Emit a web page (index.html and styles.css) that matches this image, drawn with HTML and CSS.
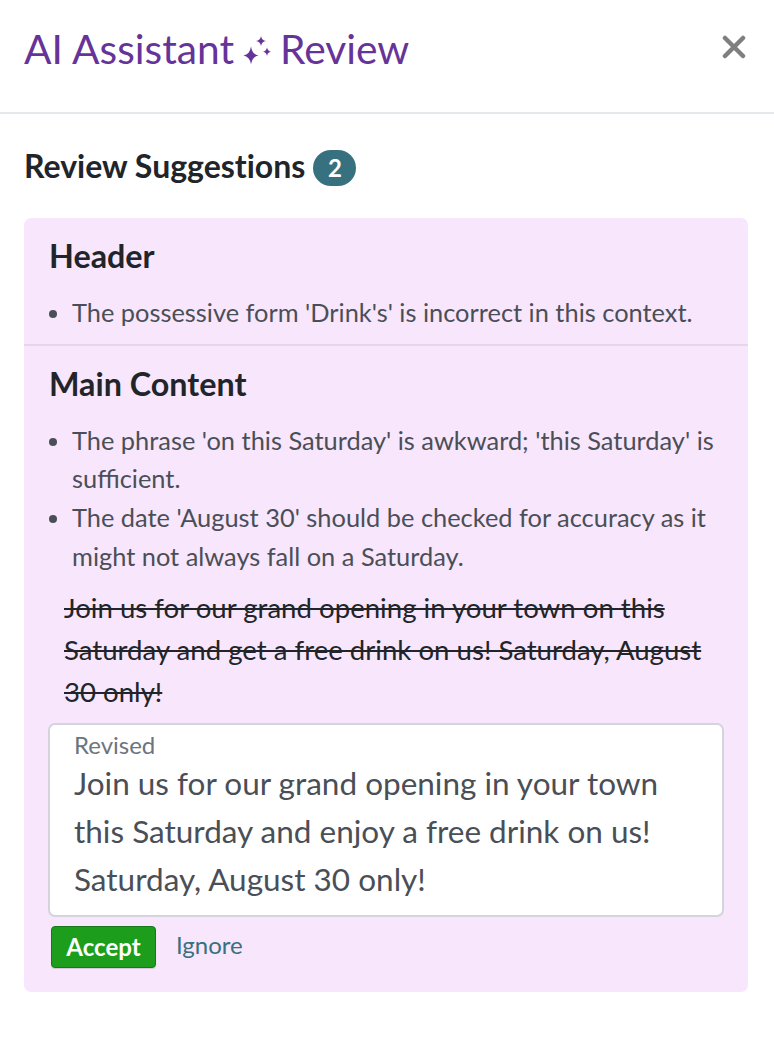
FILE: index.html
```html
<!DOCTYPE html>
<html lang="en">
<head>
<meta charset="utf-8">
<title>AI Assistant Review</title>
<link rel="stylesheet" href="styles.css">
</head>
<body>
<div class="panel">
  <header class="panel-header">
    <h1 class="title">AI Assistant
      <svg class="sparkle" viewBox="0 0 32 30" width="32" height="30" aria-hidden="true">
        <path d="M10 12.5 Q11.1 20.4 17.5 21.5 Q11.1 22.6 10 30.5 Q8.9 22.6 2.5 21.5 Q8.9 20.4 10 12.5 Z"/>
        <path d="M20 2 Q20.7 6.3 25 7 Q20.7 7.7 20 12 Q19.3 7.7 15 7 Q19.3 6.3 20 2 Z"/>
        <path d="M26 13.5 Q26.6 17.1 30 17.7 Q26.6 18.3 26 21.9 Q25.4 18.3 22 17.7 Q25.4 17.1 26 13.5 Z"/>
      </svg>
      Review</h1>
    <button class="close" aria-label="Close">
      <svg viewBox="0 0 24 24" width="24" height="24" aria-hidden="true">
        <path d="M3 3 L21 21 M21 3 L3 21"/>
      </svg>
    </button>
  </header>

  <main class="panel-body">
    <h2 class="suggestions-title">Review Suggestions <span class="badge">2</span></h2>

    <div class="card">
      <section class="card-section">
        <h3 class="section-title">Header</h3>
        <ul class="issues">
          <li>The possessive form 'Drink's' is incorrect in this context.</li>
        </ul>
      </section>
      <section class="card-section">
        <h3 class="section-title">Main Content</h3>
        <ul class="issues">
          <li>The phrase 'on this Saturday' is awkward; 'this Saturday' is sufficient.</li>
          <li>The date 'August 30' should be checked for accuracy as it might not always fall on a Saturday.</li>
        </ul>
        <p class="original">Join us for our grand opening in your town on this Saturday and get a free drink on us! Saturday, August 30 only!</p>
        <div class="revised">
          <div class="revised-label">Revised</div>
          <div class="revised-text">Join us for our grand opening in your town this Saturday and enjoy a free drink on us! Saturday, August 30 only!</div>
        </div>
        <div class="actions">
          <button class="btn-accept">Accept</button>
          <a class="btn-ignore" href="#">Ignore</a>
        </div>
      </section>
    </div>
  </main>
</div>
</body>
</html>
```

FILE: styles.css
```css
* { box-sizing: border-box; }

html, body {
  margin: 0;
  background: #ffffff;
}

body {
  font-family: Lato, "Noto Sans", "Liberation Sans", sans-serif;
  color: #212529;
}

.panel-header {
  display: flex;
  align-items: flex-start;
  justify-content: space-between;
  height: 114px;
  padding: 24px 28px 0 24px;
  border-bottom: 2px solid #e6e9ec;
}

.title {
  margin: 0;
  font-size: 40.7px;
  font-weight: 400;
  line-height: 49px;
  color: #663399;
  display: flex;
  align-items: flex-start;
  gap: 7px;
}

.sparkle {
  fill: #663399;
  margin-top: 10px;
}

.close {
  background: none;
  border: 0;
  padding: 0;
  margin-top: 11px;
  cursor: pointer;
}

.close svg {
  stroke: #7f7f7f;
  stroke-width: 4.5;
  stroke-linecap: round;
  fill: none;
  display: block;
}

.panel-body {
  padding: 33px 26px 0 24px;
}

.suggestions-title {
  margin: 0 0 32px;
  font-size: 32px;
  font-weight: 700;
  line-height: 38px;
  display: flex;
  align-items: flex-start;
  gap: 8px;
  font-variant-ligatures: none;
}

.badge {
  display: inline-flex;
  align-items: center;
  justify-content: center;
  min-width: 43px;
  height: 36px;
  margin-top: 3px;
  padding: 0 13px;
  border-radius: 18px;
  background: #37717f;
  color: #ffffff;
  font-size: 24px;
  font-weight: 700;
  line-height: 1;
}

.card {
  background: #f8e6fc;
  border-radius: 7px;
  padding-bottom: 24px;
}

.card-section {
  padding: 19px 24px 12px 24px;
}

.card-section + .card-section {
  border-top: 2px solid #e5d7e9;
  padding-bottom: 0;
}

.section-title {
  margin: 0 0 18px 1px;
  font-size: 32.3px;
  font-weight: 700;
  line-height: 38px;
  color: #212529;
}

.issues {
  margin: 0;
  padding-left: 24px;
  font-size: 25.4px;
  line-height: 38.7px;
  color: #4a4f57;
}

.original {
  margin: 11px 16px 0 16px;
  font-size: 27.6px;
  line-height: 42px;
  color: #212529;
  text-decoration: line-through;
}

.revised {
  margin-top: 10px;
  background: #ffffff;
  border: 2px solid #d3d4dc;
  border-radius: 7px;
  padding: 5px 24px 12px 24px;
}

.revised-label {
  font-size: 24px;
  line-height: 29px;
  color: #6c757d;
}

.revised-text {
  font-size: 31.5px;
  line-height: 48px;
  color: #4a4f57;
}

.actions {
  display: flex;
  align-items: center;
  gap: 20px;
  margin-top: 9px;
  padding-left: 3px;
}

.btn-accept {
  font-family: inherit;
  font-size: 24px;
  font-weight: 700;
  color: #ffffff;
  background: #1c9e1c;
  border: 1px solid #15791a;
  border-radius: 4px;
  padding: 0 14px;
  width: 105px;
  height: 42px;
  box-shadow: 0 1px 1px rgba(0,0,0,0.15);
}

.btn-ignore {
  font-size: 24px;
  color: #37717f;
  text-decoration: none;
  margin-top: -4px;
}
```
